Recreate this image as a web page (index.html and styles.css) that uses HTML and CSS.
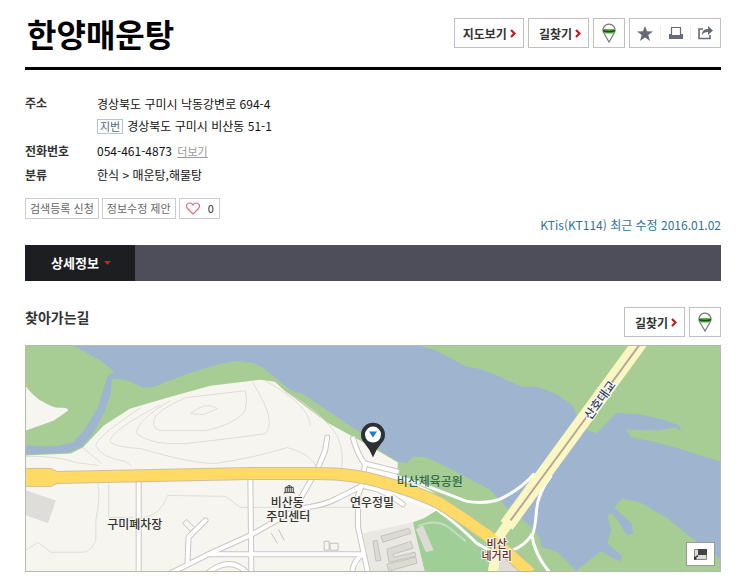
FILE: index.html
```html
<!DOCTYPE html>
<html lang="ko">
<head>
  <meta charset="UTF-8">
  <meta name="viewport" content="width=device-width, initial-scale=1.0">
  <title>한양매운탕</title>
  <link rel="stylesheet" href="styles.css">
</head>
<body>
<svg class="defs" aria-hidden="true">
  <symbol id="arrow" viewBox="0 0 6 9">
    <path d="M1 1l3.500 3.500L1 8" fill="none" stroke="#c4161c" stroke-width="2.200"/>
  </symbol>
  <symbol id="roadview" viewBox="0 0 14 20">
    <path d="M7 19L1.500 9.500a6 6 0 1 1 11 0z" fill="#fff" stroke="#777" stroke-width="1.200"/>
    <path d="M1 6h12v3q-1 1.500-2 1.500H3q-1 0-2-1.500z" fill="#5cb84a"/>
    <path d="M1 7q6 1.500 12 0v1.500q-6 2-12 0z" fill="#1d4c1a"/>
  </symbol>
</svg>

<div class="container">
  <header class="header">
    <h1>한양매운탕</h1>
    <div class="buttons">
      <button class="btn">지도보기<svg class="arrow"><use href="#arrow"/></svg></button>
      <button class="btn">길찾기<svg class="arrow"><use href="#arrow"/></svg></button>
      <button class="btn btn-pin" aria-label="로드뷰"><svg class="roadview"><use href="#roadview"/></svg></button>
      <div class="tools">
        <button aria-label="즐겨찾기">
          <svg width="16" height="15" viewBox="0 0 16 15"><path d="M8 0l2 5.300 6 .200-4.700 3.500L13 15l-5-3.400L3 15l1.700-6L0 5.500l6-.200z" fill="#676b76"/></svg>
        </button>
        <button aria-label="인쇄">
          <svg width="14" height="14" viewBox="0 0 14 14"><path d="M2.500 9V1.500h9V9" fill="none" stroke="#676b76" stroke-width="1.200"/><path d="M0 8h2v1h10V8h2v5H0z" fill="#676b76"/></svg>
        </button>
        <button aria-label="공유">
          <svg width="15" height="14" viewBox="0 0 15 14"><path d="M5 3H1v9.500h11V9" fill="none" stroke="#676b76" stroke-width="1.600"/><path d="M4 9c0-4 2-6 6-6V0l5 4.500L10 9V6C7 6 5 7 4 9z" fill="#676b76"/></svg>
        </button>
      </div>
    </div>
  </header>

  <dl class="info">
    <dt>주소</dt>
    <dd class="address">경상북도 구미시 낙동강변로 694-4<br><span class="tag">지번</span>경상북도 구미시 비산동 51-1</dd>
    <dt>전화번호</dt>
    <dd>054-461-4873 <a href="#" class="more">더보기</a></dd>
    <dt>분류</dt>
    <dd>한식 &gt; 매운탕,해물탕</dd>
  </dl>

  <div class="info-foot">
    <div class="actions">
      <button>검색등록 신청</button>
      <button>정보수정 제안</button>
      <button class="like">
        <svg width="14" height="13" viewBox="0 0 14 13"><path d="M7 12L1.500 6.500C-.500 4 1 1 3.700 1 5.500 1 6.500 2 7 3c.500-1 1.500-2 3.300-2C13 1 14.500 4 12.500 6.500z" fill="#fff" stroke="#d9717b" stroke-width="1.200"/></svg>
        <span>0</span>
      </button>
    </div>
    <p class="updated">KTis(KT114) 최근 수정 2016.01.02</p>
  </div>

  <nav class="tabs">
    <a href="#way" class="active">상세정보<svg width="7" height="4" viewBox="0 0 7 4"><path d="M0 0h7L3.500 4z" fill="#e0161c"/></svg></a>
  </nav>

  <section id="way">
    <div class="section-head">
      <h2>찾아가는길</h2>
      <div class="buttons">
        <button class="btn">길찾기<svg class="arrow"><use href="#arrow"/></svg></button>
        <button class="btn btn-pin" aria-label="로드뷰"><svg class="roadview"><use href="#roadview"/></svg></button>
      </div>
    </div>

    <div class="map">
      <svg class="map-svg" viewBox="0 0 696 226" preserveAspectRatio="xMidYMid slice">
        <defs>
          <g id="roads">
            <path d="M113 136V227M225 133L226 227"/>
            <path d="M145 228L185 208 225 190 255 173 275 163Q300 160 312 153L336 141"/>
            <path d="M162 217L163 192 180 175"/>
            <path d="M185 209H338"/>
            <path d="M182 228Q205 210 222 228"/>
            <path d="M302 92L300 105 293 122 273 157"/>
            <path d="M328 93Q332 108 340 119L336 142 333 150V182L343 228"/>
            <path d="M340 118L372 126"/>
            <path d="M338 209Q328 215 327 228"/>
            <path d="M340 141Q360 144 378 159"/>
          </g>
        </defs>

        <!-- ground -->
        <rect width="696" height="226" fill="#a7cd94"/>
        <path fill="#f6f5ef" d="M0 110L45 108 57 102 78 80 104 63 145 51 185 40 235 34 250 36 262 47 302 77 335 95 373 117 372 131 404 144 430 162 388 177 400 227H0z"/>
        <path fill="#f6f5ef" d="M0 41Q10 53 17 56 28 63 36 62 43 62 42 65L28 75 0 85z"/>
        <path fill="#9fcf97" d="M388 180L412 165 455 190 505 227H400z"/>

        <!-- river -->
        <path fill="#9fb5cf" d="M48 0L75 15 88 26 86 33 100 34 118 42 128 41 162 28 195 18 212 15 227 17 238 22 250 36 262 47 275 47 292 58 335 87 358 107 373 116 382 118 388 111 402 112 425 123 442 132 465 144 482 162 505 180 515 192 517 202 532 206 552 226 565 215 577 206 588 213 597 216 597 210 583 198 587 185 583 170 588 168 603 190 609 188 607 178 590 162 598 153 615 157 642 172 668 193 696 213V116L655 103 625 95 607 92 602 84 632 85 652 82 657 87 655 80 642 75 618 69 592 67 578 82 572 88 562 84 555 75 548 60 532 48 512 41 498 41 468 28 455 23 442 21 412 5 395 0z"/>
        <path fill="#9fb5cf" d="M88 26L86 33 85 48 78 68 67 88 55 102 42 107 0 109V100L28 101 47 97 58 85 72 62 77 45 82 30z"/>
        <path fill="#a7cd94" d="M238 22L250 36 262 47 275 47 292 58 262 42z"/>

        <!-- contour lines -->
        <g fill="none" stroke="#deddd6">
          <path d="M165 68Q180 55 192 63L178 69z"/>
          <path d="M128 75Q130 65 160 52L220 45Q223 58 218 68 205 80 180 85H135Q127 83 128 75z"/>
          <path d="M145 55Q110 75 111 88 125 100 160 98 215 92 240 88 250 78 235 50L227 36"/>
          <path d="M135 59Q85 85 84 96 90 102 115 103 165 118 190 118 230 112 262 102 285 108 292 122"/>
          <path d="M115 62Q70 92 70 100 75 112 100 116L106 121M57 102L76 118M0 111Q30 110 50 117L72 120"/>
          <path d="M262 47Q300 70 312 90 320 110 316 124M240 35Q285 60 285 80"/>
          <path d="M72 138Q75 150 70 175V195Q65 208 55 207H25L12 197 0 205M83 138V172H108M118 172Q135 170 142 150L200 151 215 162H330"/>
        </g>

        <!-- buildings -->
        <path fill="#e9e8e2" d="M338 188L388 177 400 227H344z"/>
        <path fill="#deddd9" d="M0 145L30 155 22 178 0 170zM475 206L500 226H470z"/>
        <g fill="#dbdad5" stroke="#c4c2bd">
          <path d="M356 191L384 183 386 188 358 197zM348 196L352 195 356 215 351 216zM362 204L386 196 388 203 368 209 369 212 390 207 391 211 364 217zM362 219L391 212 392 218 364 226z"/>
          <path fill="none" d="M299 196h5v9h-5zM305 198h8v7h-8zM246 188l6 10M253 184l6 11M243 182l18-10M157 178l4-4 8 8-4 4z"/>
        </g>
        <path fill="#dbdad5" d="M391 184L398 180 409 205 401 207z"/>
        <path fill="none" stroke="#c6dcc0" stroke-width="2" d="M393 181Q410 173 424 182L441 196"/>

        <!-- roads -->
        <use href="#roads" class="road-case"/>
        <use href="#roads" class="road"/>
        <g fill="none" stroke="#fff" stroke-width="3">
          <path d="M342 125Q380 131 408 143L442 156Q460 159 475 154 496 144 510 128"/>
          <path d="M358 143Q395 160 412 164 432 178 452 198L470 208"/>
          <path d="M527 130Q513 148 512 165 510 190 507 190 500 200 488 205M507 188Q510 210 525 227"/>
        </g>
        <path class="highway-case" d="M30 132L225 128H292Q330 128 358 137 392 146 415 158 430 167 465 192L506 228"/>
        <path fill="#ffdb66" stroke="#cfbf9a" d="M-1 123H25L31 126V138L25 141H-1z"/>
        <path class="highway" d="M29 132L225 128H292Q330 128 358 137 392 146 415 158 430 167 465 192L506 228"/>
        <path class="bridge" d="M617 -5L530 114 482 180"/>
        <path class="bridge narrow" d="M485 176L474 192 468 228"/>
        <path d="M616 -2L539 103 486 175" fill="none" stroke="#b5a89a" stroke-width="2"/>
        <path d="M459 187L490 214" stroke="#ffdb66" stroke-width="11"/>

        <!-- labels -->
        <g class="label">
          <text x="109" y="184">구미폐차장</text>
          <text x="262" y="162">비산동</text>
          <text x="263" y="176">주민센터</text>
          <text x="347" y="162">연우정밀</text>
          <text x="405" y="141" class="park">비산체육공원</text>
          <text x="472" y="203" class="cross">비산</text>
          <text x="472" y="215" class="cross">네거리</text>
          <text transform="translate(579 57) rotate(-54)" class="bridge-name">산호대교</text>
        </g>
        <path d="M259 148V147H269V148M260 147V142H268V147M262 142V147M264 140V147M266 142V147M261 142Q264 138 267 142" fill="none" stroke="#444"/>

        <!-- place marker -->
        <path fill="#2d3036" d="M348 112Q345 104 339 97A12 12 0 1 1 357 97Q351 104 348 112z"/>
        <circle cx="348" cy="89" r="8" fill="#fff"/>
        <path fill="#1c7ad0" d="M344 86H352L348 92z"/>
      </svg>
      <button class="map-toggle" aria-label="지도 크게 보기">
        <svg width="13" height="11" viewBox="0 0 13 11"><path d="M.500.500h12v10H.500z" fill="#ddd" stroke="#888"/><path d="M4 0h9v6H4z" fill="#444"/><path d="M0 11V7l1 1 2.500-2 1 1L2 9l1 1z" fill="#333"/></svg>
      </button>
    </div>
  </section>
</div>
</body>
</html>
```

FILE: styles.css
```css
* {
  box-sizing: border-box;
}
body {
  margin: 0;
  background: #fff;
  color: #111;
  font-family: "Noto Sans CJK KR", sans-serif;
  font-size: 12px;
  line-height: 20px;
}
h1, h2, p, dl, dd {
  margin: 0;
}
button {
  font-family: inherit;
  cursor: pointer;
}
svg {
  display: block;
}
.defs {
  position: absolute;
  width: 0;
  height: 0;
}
.container {
  padding: 0 19px 8px 25px;
}
.header {
  display: flex;
  justify-content: space-between;
  align-items: center;
  padding: 18px 0 19px;
  border-bottom: 3px solid #000;
}
h1 {
  padding-left: 2px;
  color: #000;
  font-size: 32px;
  line-height: 30px;
}
.buttons {
  display: flex;
  gap: 4px;
}
.btn {
  display: flex;
  align-items: center;
  gap: 3px;
  height: 30px;
  padding: 0 7px 0 8px;
  border: 1px solid #c0c0c0;
  background: #fff;
  color: #333;
  font-size: 12px;
  font-weight: bold;
}
.btn:nth-child(n+2), .section-head .btn {
  padding-left: 10px;
}
.arrow {
  width: 6px;
  height: 9px;
}
.buttons .btn-pin {
  justify-content: center;
  width: 32px;
  padding: 0;
}
.roadview {
  width: 14px;
  height: 20px;
}
.tools {
  display: flex;
  align-items: center;
  height: 30px;
  border: 1px solid #c0c0c0;
}
.tools button {
  display: flex;
  justify-content: center;
  width: 30px;
  padding: 0;
  border: 0;
  background: #fff;
}
.tools button + button {
  border-left: 1px solid #eee;
}
.info {
  display: grid;
  grid-template-columns: 72px 1fr;
  row-gap: 4px;
  padding-top: 23px;
}
.info dt {
  color: #333;
  font-weight: bold;
}
.info .address {
  line-height: 22px;
}
.tag {
  display: inline-block;
  margin-right: 4px;
  padding: 0 2px;
  border: 1px solid #b4c4d6;
  color: #4c6888;
  font-size: 11px;
  line-height: 13px;
}
.more {
  margin-left: 2px;
  color: #999;
  font-size: 11px;
}
.info-foot {
  display: flex;
  justify-content: space-between;
  align-items: flex-start;
  margin-top: 13px;
}
.actions {
  display: flex;
  gap: 3px;
}
.actions button {
  height: 21px;
  padding: 0 4px;
  border: 1px solid #ccc;
  background: #fff;
  color: #666;
  font-size: 11px;
  line-height: 17px;
}
.actions .like {
  display: flex;
  align-items: center;
  gap: 8px;
  padding: 0 5px 0 6px;
  color: #333;
}
.updated {
  padding-top: 17px;
  color: #2f7299;
}
.tabs {
  display: flex;
  height: 36px;
  margin-top: 10px;
  background: #4d4e59;
}
.tabs .active {
  display: flex;
  align-items: center;
  gap: 5px;
  padding: 0 24px 0 26px;
  background: #1d1e22;
  color: #fff;
  font-size: 13px;
  font-weight: bold;
  text-decoration: none;
}
.section-head {
  display: flex;
  justify-content: space-between;
  margin: 26px 0 8px;
}
h2 {
  color: #333;
  font-size: 14px;
  line-height: 20px;
}
.map {
  position: relative;
  border: 1px solid #b5bcae;
}
.map-svg {
  width: 100%;
  height: 225px;
}
.map-toggle {
  position: absolute;
  right: 5px;
  bottom: 5px;
  display: flex;
  align-items: center;
  justify-content: center;
  width: 29px;
  height: 24px;
  padding: 0;
  border: 1px solid #999;
  background: #fff;
}
.road-case, .road, .highway-case, .highway, .bridge {
  fill: none;
  stroke-linejoin: round;
}
.road-case {
  stroke: #c9c7c4;
  stroke-width: 6px;
  stroke-linecap: round;
}
.road {
  stroke: #fff;
  stroke-width: 4px;
  stroke-linecap: round;
}
.highway-case {
  stroke: #cfbf9a;
  stroke-width: 13px;
}
.highway {
  stroke: #ffdb66;
  stroke-width: 11px;
}
.bridge {
  stroke: #faf7c3;
  stroke-width: 15px;
}
.bridge.narrow {
  stroke-width: 10px;
}
.label {
  fill: #333;
  stroke: #f6f5ef;
  stroke-width: 2px;
  paint-order: stroke;
  font-size: 12px;
  font-weight: 500;
  text-anchor: middle;
}
.label .park {
  fill: #2f6b4f;
  stroke: none;
}
.label .cross {
  fill: #6a2f33;
  font-size: 11px;
}
.label .bridge-name {
  fill: #2c3e5c;
  stroke: #fff;
}
```
